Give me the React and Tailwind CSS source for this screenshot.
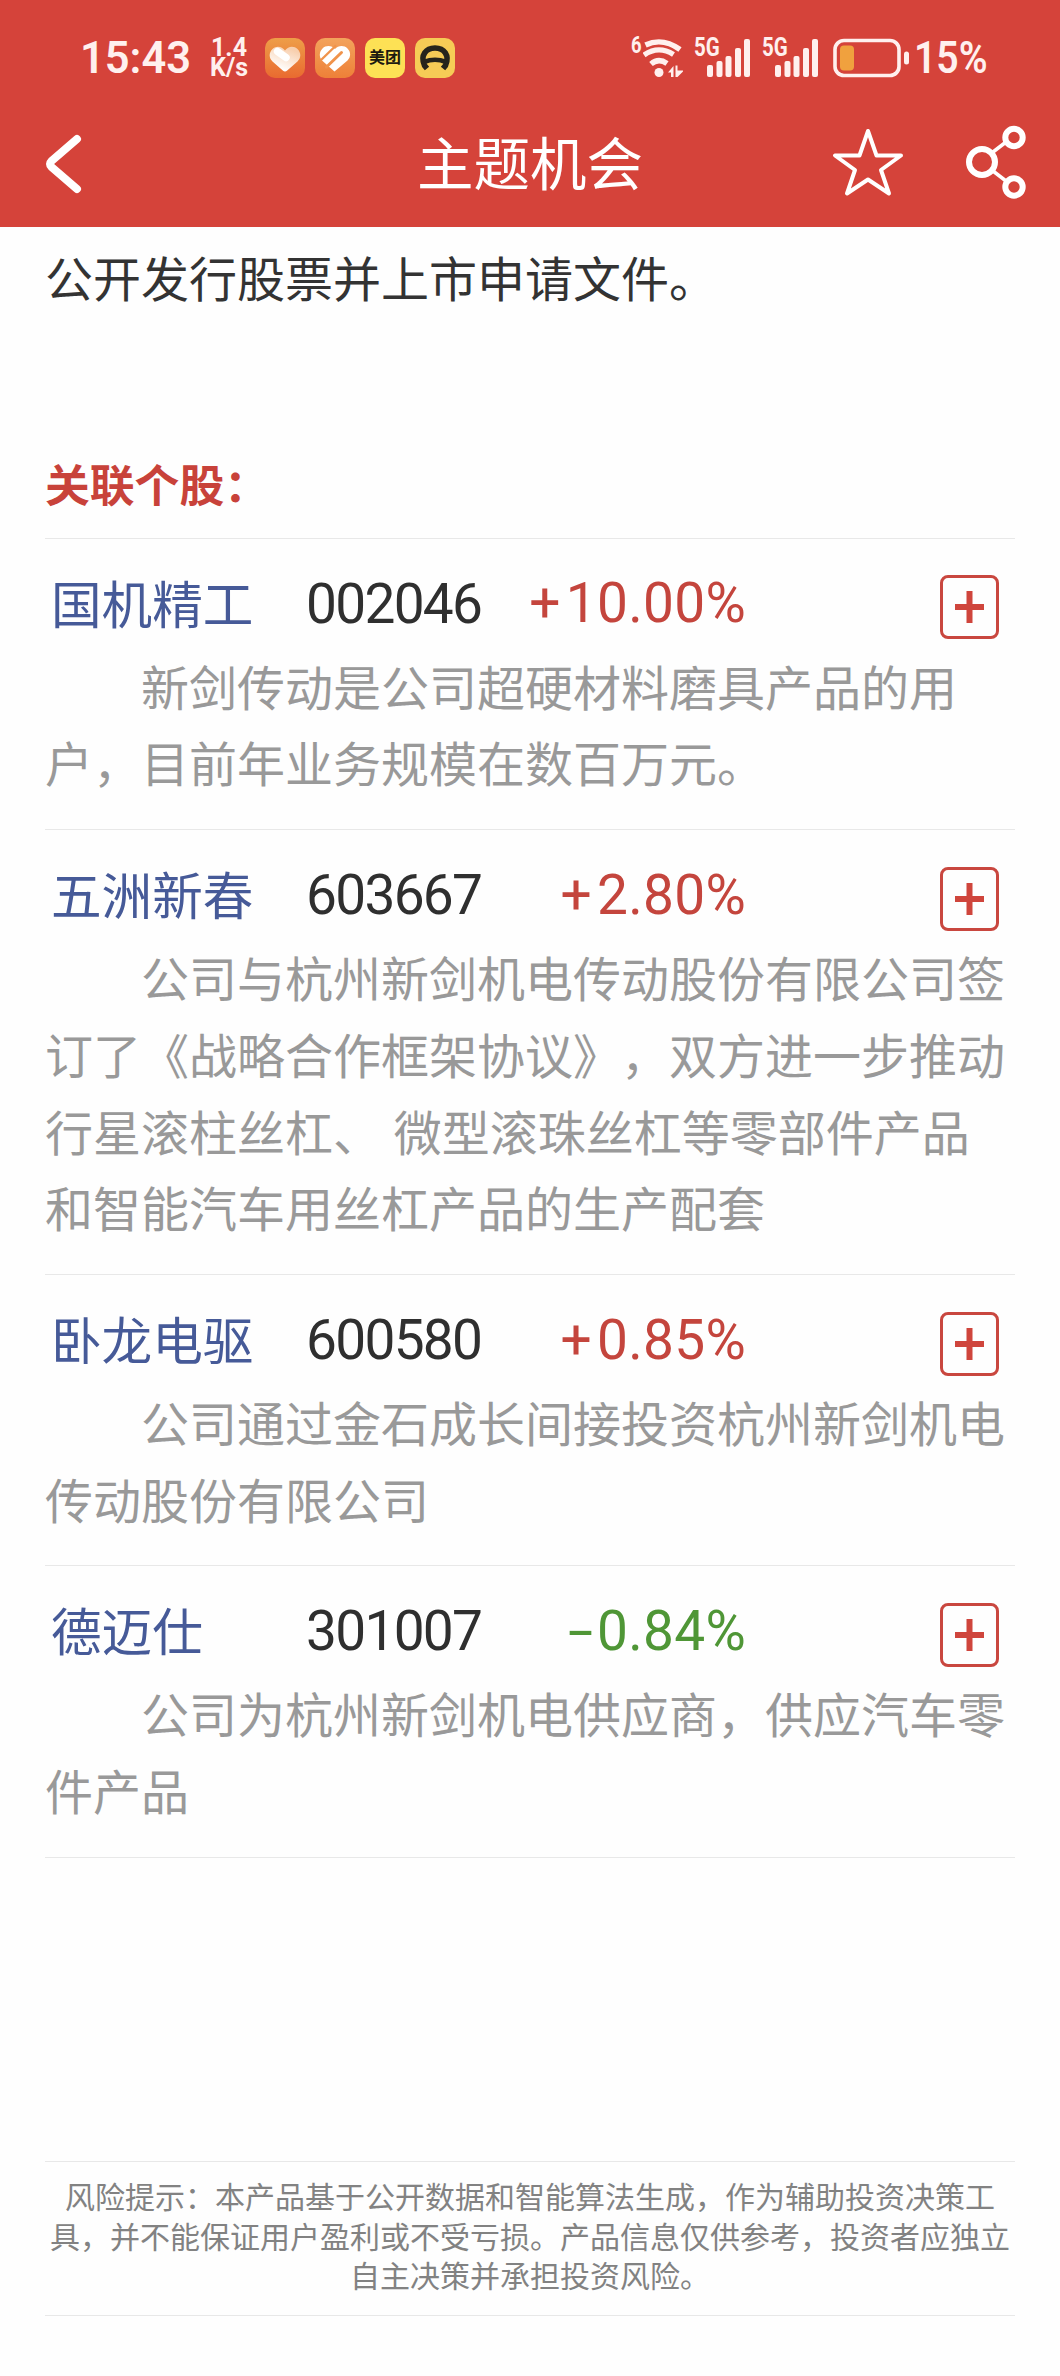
import React from 'react';

const stocks = [
  {
    name: '国机精工',
    code: '002046',
    change: '+10.00%',
    desc: '新剑传动是公司超硬材料磨具产品的用户，目前年业务规模在数百万元。',
  },
  {
    name: '五洲新春',
    code: '603667',
    change: '+2.80%',
    desc: '公司与杭州新剑机电传动股份有限公司签订了《战略合作框架协议》，双方进一步推动行星滚柱丝杠、 微型滚珠丝杠等零部件产品和智能汽车用丝杠产品的生产配套',
  },
  {
    name: '卧龙电驱',
    code: '600580',
    change: '+0.85%',
    desc: '公司通过金石成长间接投资杭州新剑机电传动股份有限公司',
  },
  {
    name: '德迈仕',
    code: '301007',
    change: '-0.84%',
    desc: '公司为杭州新剑机电供应商，供应汽车零件产品',
  },
];

const HeartIcon = () => (
  <svg className="w-10 h-10" viewBox="0 0 40 40">
    <defs>
      <linearGradient id="heartBg" x1="0" y1="0" x2="0" y2="1">
        <stop offset="0" stopColor="#ee9e48" />
        <stop offset="1" stopColor="#e96a30" />
      </linearGradient>
      <linearGradient id="heartFill" x1="0.7" y1="0.1" x2="0.3" y2="0.9">
        <stop offset="0" stopColor="#f8cfae" />
        <stop offset="1" stopColor="#fff" />
      </linearGradient>
    </defs>
    <rect width="40" height="40" rx="10" fill="url(#heartBg)" />
    <path d="M20 12.5C17 8 11 7.500 7.500 11C3.500 15 4 20 7.500 23.500L17.800 32.500Q20 34.300 22.200 32.500L32.500 23.500C36 20 36.500 15 32.500 11C29 7.500 23 8 20 12.500Z" fill="url(#heartFill)" />
    <path d="M12.500 13.500L21 19.500" stroke="#fff" strokeWidth="7.500" strokeLinecap="round" />
  </svg>
);

const StripedHeartIcon = () => (
  <svg className="w-10 h-10" viewBox="0 0 40 40">
    <defs>
      <linearGradient id="stripeBg" x1="0" y1="0" x2="0" y2="1">
        <stop offset="0" stopColor="#f3a35c" />
        <stop offset="1" stopColor="#ee8038" />
      </linearGradient>
    </defs>
    <rect width="40" height="40" rx="10" fill="url(#stripeBg)" />
    <path d="M20 11C17 7.500 11 7 7.500 10.500C4 14 4 19 7 22.500L19.500 33.500L32.500 22.500C36 19 36 14 32.500 10.500C29 7 23 7.500 20 11Z" fill="#fff" />
    <g fill="none" stroke="#f0934b" strokeWidth="2.400">
      <path d="M5.500 22.500L21 7.500" />
      <path d="M11.500 29L26.500 14.500" strokeWidth="3" strokeLinecap="round" />
    </g>
  </svg>
);

const CarIcon = () => (
  <svg className="w-10 h-10" viewBox="0 0 40 40">
    <rect width="40" height="40" rx="10" fill="#f6cb56" />
    <path d="M12 30.500L9.500 27.500C5 17 11 10 20 10C29 10 35 17 30.500 27.500L28 30.500" fill="none" stroke="#26241c" strokeWidth="5.600" />
    <path d="M9 24Q20 19.500 31 24" fill="none" stroke="#26241c" strokeWidth="4.600" />
  </svg>
);

const WifiIcon = () => (
  <svg className="w-10 h-[38px]" viewBox="0 0 40 38">
    <g fill="none" stroke="#fff0ee" strokeWidth="5.400">
      <path d="M2.500 6Q19.500 -2 37 10.500" />
      <path d="M1 16Q15.500 6 30.500 15.500" />
      <path d="M8 25Q15.500 18.500 24 24.500" />
    </g>
    <circle cx="16" cy="33.500" r="4.500" fill="#fff0ee" />
    <path d="M25 33.500L30.500 27V38H28V33.500ZM32.500 26.500H34.500V31.500H41L34.500 38H32.500Z" fill="#fff0ee" />
  </svg>
);

const Signal = () => (
  <div className="relative w-[57px] h-[38px]">
    <span className="absolute left-0 top-0 text-[25px] leading-[18px] font-bold origin-left scale-x-[.82]">5G</span>
    <svg className="w-full h-full" viewBox="0 0 57 38" fill="#fff0ee">
      <rect x="13" y="26" width="6" height="12" rx="2" />
      <rect x="22.500" y="22" width="6" height="16" rx="2" />
      <rect x="31.500" y="17" width="6" height="21" rx="2" />
      <rect x="41" y="9" width="6" height="29" rx="2" />
      <rect x="50" y="0" width="6" height="38" rx="2" />
    </svg>
  </div>
);

const StatusBar = () => (
  <div className="flex items-center h-[116px] pl-[80px] text-[#fff0ee] font-['Roboto','Noto_Sans_CJK_SC',sans-serif]">
    <span className="w-[129px] text-[45px] leading-[46px] font-semibold origin-left scale-x-[.965]">15:43</span>
    <div className="w-[40px] mr-[16px] text-center text-[25px] leading-[20.500px] font-bold">
      1.4
      <br />
      K/s
    </div>
    <div className="flex gap-[10px]">
      <HeartIcon />
      <StripedHeartIcon />
      <div className="w-10 h-10 rounded-[10px] bg-[#fde155] flex items-center justify-center text-[16px] leading-none font-bold text-[#1c1a10]">美团</div>
      <CarIcon />
    </div>
    <div className="ml-[176px] flex items-center">
      <div className="relative w-[63px] pl-[12px]">
        <span className="absolute left-0 -top-1 text-[23px] leading-[22px] font-bold origin-left scale-x-[.8]">6</span>
        <WifiIcon />
      </div>
      <div className="flex gap-[11px]">
        <Signal />
        <Signal />
      </div>
      <svg className="ml-[14px] w-[77px] h-[40px]" viewBox="0 0 77 40">
        <rect x="2" y="2.500" width="64" height="35" rx="9" fill="none" stroke="#fff0ee" strokeWidth="3.600" />
        <rect x="7" y="7.500" width="14" height="25" rx="4" fill="#f0a13e" />
        <rect x="71" y="13.500" width="5" height="13" rx="2.500" fill="#fff0ee" />
      </svg>
      <span className="ml-[4px] text-[45px] leading-[46px] font-semibold origin-left scale-x-[.87]">15%</span>
    </div>
  </div>
);

const Header = () => (
  <header className="h-[227px] bg-[#d5433a] text-white">
    <StatusBar />
    <div className="flex items-center h-[92px] px-[32px]">
      <div className="w-[340px]">
        <svg className="ml-[9px] w-[48px] h-[64px]" viewBox="0 0 48 64" fill="none" stroke="#fff" strokeWidth="8" strokeLinecap="round" strokeLinejoin="round">
          <path d="M36 9L10.500 31Q7.500 34 10.500 37L36 59" />
        </svg>
      </div>
      <h1 className="flex-1 -mt-[5px] text-center text-[56.500px] leading-[80px] font-normal">主题机会</h1>
      <div className="w-[340px] flex justify-end items-center gap-[59px] pr-px">
        <svg className="w-[72px] h-[70px]" viewBox="0 0 72 70" fill="none" stroke="#fff" strokeWidth="4" strokeLinejoin="round">
          <path d="M36 4L44.500 28.500H69L49 43L57 66.500L36 52.500L15 66.500L23 43L3 28.500H27.500Z" />
        </svg>
        <svg className="w-[64px] h-[76px]" viewBox="0 0 64 76" fill="none" stroke="#fff" strokeWidth="6">
          <path d="M30 28L43 18M30 47L43 57" strokeWidth="3.500" />
          <circle cx="19" cy="38" r="13" />
          <circle cx="51" cy="13.500" r="8.700" />
          <circle cx="51" cy="63" r="8.700" />
        </svg>
      </div>
    </div>
  </header>
);

const AddButton = () => (
  <button className="w-[59px] h-[64px] rounded-[8px] border-[3px] border-[#c9473f] flex items-center justify-center">
    <svg className="w-[29px] h-[32px]" viewBox="0 0 29 32" stroke="#cf453c" strokeWidth="6">
      <path d="M14.500 0V32M0 16H29" />
    </svg>
  </button>
);

const Change = ({ value }) => {
  const up = value[0] === '+';
  return (
    <span className={`w-[260px] mt-[1px] mr-[1px] text-right text-[55px] tracking-[.300px] font-['Roboto'] ${up ? 'text-[#c4453d]' : 'text-[#4f9636]'}`}>
      <span className={up ? 'mr-[5px]' : 'inline-block mr-[3px] origin-right scale-x-[1.650]'}>{value[0]}</span>
      {value.slice(1)}
    </span>
  );
};

const StockItem = ({ stock }) => (
  <section className="border-t border-[#e8e8e8] pb-[29px]">
    <div className="flex items-center h-[107.700px] pt-[20px] pl-[6px] pr-[16px] text-[50.600px] leading-[64px]">
      <span className="w-[255px] -mt-[2px] text-[#465a98]">{stock.name}</span>
      <span className="w-[180px] mt-[2px] text-[55px] tracking-[-1.700px] text-[#2f2f2f] font-['Roboto']">{stock.code}</span>
      <Change value={stock.change} />
      <div className="ml-auto mt-[9px]">
        <AddButton />
      </div>
    </div>
    <p className="indent-[96px] text-[48px] leading-[76.800px] [word-spacing:2px] text-[#999]">{stock.desc}</p>
  </section>
);

export default function App() {
  return (
    <div className="w-[1060px] h-[2376px] overflow-hidden bg-[#fefefe] font-['Noto_Sans_CJK_SC',sans-serif] [text-spacing-trim:space-all]" lang="zh-CN">
      <Header />
      <main className="px-[45px]">
        <p className="pt-[11px] text-[48px] leading-[76px] text-[#333]">公开发行股票并上市申请文件。</p>
        <h2 className="mt-[139px] h-[85px] text-[44.800px] leading-[60px] font-bold text-[#c8423a]">关联个股：</h2>
        <div className="h-[1623.400px]">
          {stocks.map((stock) => (
            <StockItem key={stock.code} stock={stock} />
          ))}
          <div className="border-t border-[#e8e8e8]" />
        </div>
        <footer className="h-[155px] border-y border-[#e8e8e8] pt-[14px] text-center text-[30px] leading-[39.300px] text-[#828282]">
          风险提示：本产品基于公开数据和智能算法生成，作为辅助投资决策工具，并不能保证用户盈利或不受亏损。产品信息仅供参考，投资者应独立自主决策并承担投资风险。
        </footer>
      </main>
    </div>
  );
}
